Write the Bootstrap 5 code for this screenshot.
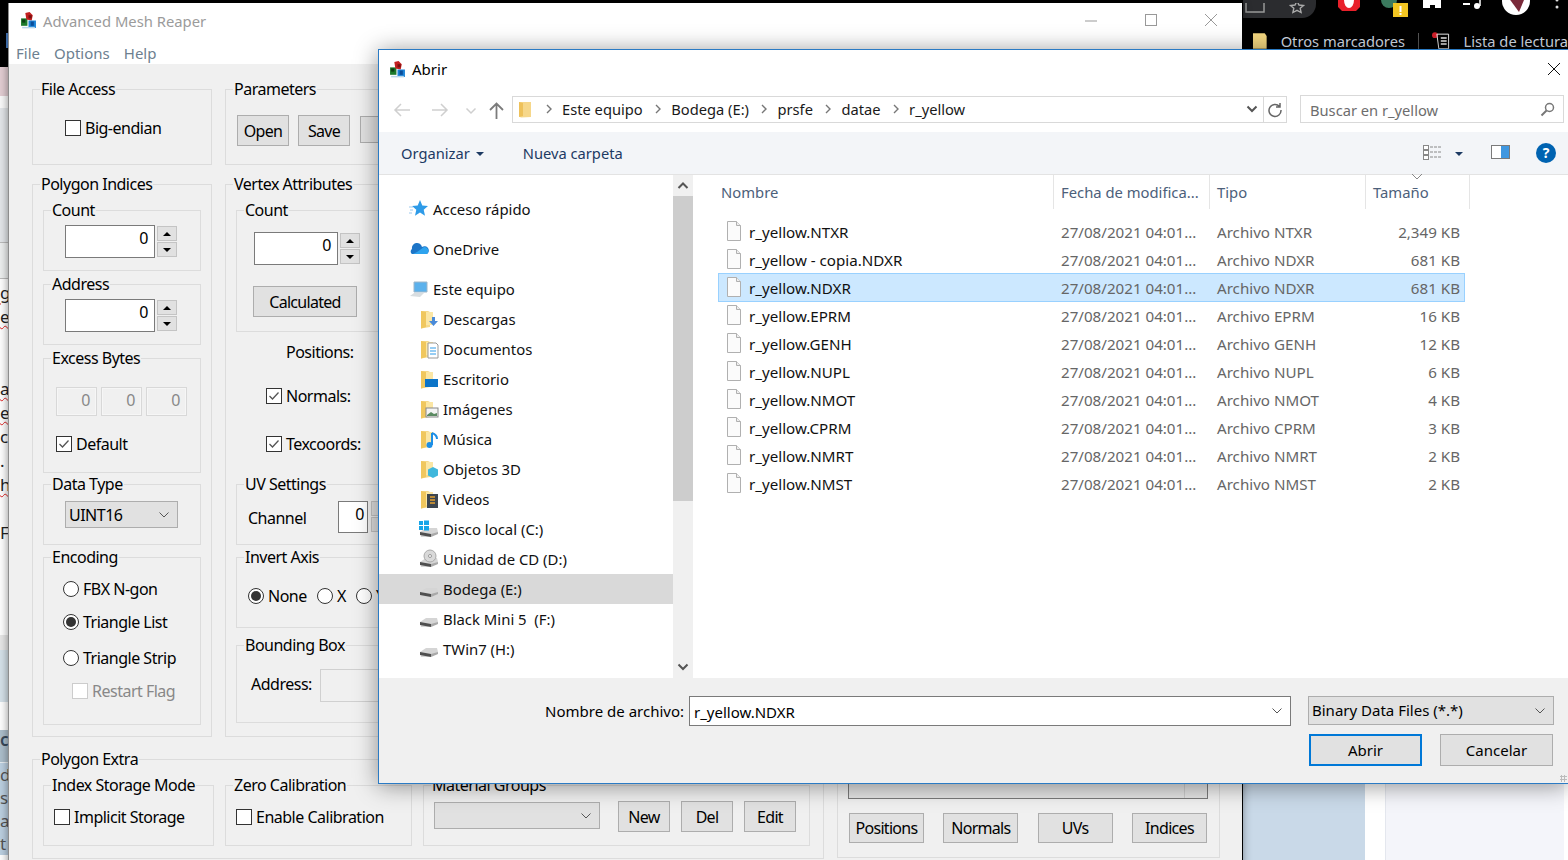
<!DOCTYPE html>
<html lang="es">
<head>
<meta charset="utf-8">
<title>Advanced Mesh Reaper</title>
<link href="https://cdn.jsdelivr.net/npm/bootstrap@5.3.0/dist/css/bootstrap.min.css" rel="stylesheet">
<style>
html,body{margin:0;height:860px;overflow:hidden;background:#000;font-family:"Noto Sans","Open Sans",sans-serif;font-size:15px;line-height:20px;color:#000}
.desk{position:relative;width:1568px;height:860px;overflow:hidden}
/* desktop behind */
.lstrip{width:30px;height:860px;background:#fff;overflow:hidden;font-size:17px;color:#222}
.ls{overflow:hidden;white-space:nowrap}
.ls-black{height:67px;background:#000;position:relative}
.ls-chip{height:15px;width:6px;margin-left:6px;background:#4a80c8;transform:translateY(33px)}
.ls-pink{height:29px;background:#e3ced3}
.ls-w{height:12px;background:#fbfbfb}
.ls-g{height:134px;background:#e4e7ea;border-bottom:1px solid #bbb;box-sizing:content-box}
.ls-g2{height:35px;background:#eef0f0;border-bottom:1px solid #bbb;box-sizing:content-box}
.ls-t{height:24px;line-height:24px;text-decoration:underline wavy #d22 1px;text-underline-offset:2px}
.ls-t2{height:24px;line-height:24px}
.ls-e1{height:2px}.ls-e2{height:48px}.ls-e3{height:90px}
.ls-g3{height:15px;background:#e8e8e8}
.ls-b1{height:52px;background:#d6e2ea}
.ls-w2{height:28px;background:#fff}
.ls-b2{height:33px;background:#adbfcc;color:#3a4a5a;border-bottom:1px solid #e8eef2;font-weight:600}
.ls-b3{height:92px;background:#bcd0e1;color:#555;line-height:23px}
.rstrip{position:absolute;left:1243px;top:0;width:325px;height:860px;background:#000}
.chrome1{height:32px;color:#fff;overflow:hidden}
.urlend{width:73px;height:18px;background:#2b2c2f;border-radius:0 0 14px 0;overflow:hidden}
.chrome2{height:17px;overflow:hidden;color:#d5dde6;font-size:14.7px;white-space:nowrap}
.mk-a{margin-left:9px;margin-right:13px}.mk-sep{width:1px;height:16px;background:#555;margin:0 13px}
.mk-l{margin-left:12px}
.rbot{height:811px}
.r-blue{width:122px;background:#c9d9e8}.r-white{width:20px;background:#fff}
.r-pale{width:179px;background:#f4f5fa;border-left:1px solid #e4e7ee}.r-end{width:4px;background:#fff}
/* app window */
.appwin{position:absolute;left:8px;top:3px;width:1234px;height:880px;background:#f0f0f0;border-left:1px solid #8d8d8d;box-shadow:0 0 9px rgba(0,0,0,.45)}
.a-title{height:35px;background:#fff;color:#9b9b9b;position:relative;padding-left:11px;font-size:14.8px}
.a-title-t{margin-left:6px}
.winctl{position:absolute;top:10px}
.wc1{left:1075px}.wc2{left:1135px}.wc3{left:1195px}
.a-menu{height:26px;background:#fff;padding:3px 0 0 7px;color:#6d7f90;column-gap:14px}
.client{padding:15px 0 0 23px;column-gap:13px;font-size:16px;letter-spacing:-.5px}
.leftcol{width:792px}.rightcol{width:383px}
fieldset.gb{border:1px solid #dcdcdc;border-radius:0;padding:0;min-width:0;display:block}
fieldset.gb>legend{float:none;width:auto;font-size:16px;line-height:19px;margin:0 0 0 7px;padding:1px 1px 0;color:#000}
.pad10{padding:0 10px!important}
fieldset.pad10>legend{margin-left:-3px!important}
.h86{height:86px}.h563{height:563px}.h71{height:71px}.h125{height:125px}.h178{height:178px}.h132{height:132px}.h81{height:81px}.h88{height:88px}.h110{height:110px}.h779{height:779px}
.mt9{margin-top:9px}.mt12{margin-top:12px}.mt3{margin-top:3px}.mt1x{margin-top:1px}.mt2x{margin-top:2px}
.inner6{margin-top:6px}
.qbtn{background:#e1e1e1;border:1px solid #adadad;color:#000;border-radius:0;text-align:center;line-height:1;padding:0;letter-spacing:-.7px}
.w52{width:52px}.h31{height:31px}.btn-third{width:52px;height:27px;margin-left:10px;margin-top:1px}
.w75{width:75px;height:30px}
.calc{width:104px;height:31px;margin:21px 0 0 16px}
.cb{width:16px;height:16px;background:#fff;border:1px solid #333;flex:none;display:inline-block;position:relative}
.cb svg{display:block;width:14px;height:14px}
.cb.off{border-color:#ccc}
.rd{width:16px;height:16px;border-radius:50%;background:#fff;border:1px solid #333;flex:none;display:inline-flex;align-items:center;justify-content:center}
.rd i{width:10px;height:10px;border-radius:50%;background:#333;display:block}
.lbl{margin-left:4px;white-space:nowrap}
.muted{color:#888}
.spin-f{background:#fff;border:1px solid #7a7a7a;text-align:right;padding:2px 6px 0 0;height:33px}
.w90{width:90px}.w84{width:84px}
.spin-c{width:20px;margin-left:2px;margin-top:1px;row-gap:1px}
.spin-b{height:15px;background:#e1e1e1;border:1px solid #c4c4c4;display:flex;align-items:center;justify-content:center}
.tri-u{width:0;height:0;border:4px solid transparent;border-top:0;border-bottom:4px solid #000}
.tri-d{width:0;height:0;border:4px solid transparent;border-bottom:0;border-top:4px solid #000}
.sp-a{margin:5px 0 0 21px}.sp-b{margin:12px 0 0 17px}
.ex-row{margin:19px 0 0 12px;column-gap:4px}
.ex-f{width:41px;height:29px;background:#f0f0f0;border:1px solid #d8d8d8;box-shadow:inset 0 0 0 1px #f6f6f6;color:#888;text-align:right;padding:2px 6px 0 0}
.ex-check{margin:18px 0 0 12px}
.cmb{background:#e1e1e1;border:1px solid #adadad;position:relative}
.cmb-chev{position:absolute;right:7px;top:50%;margin-top:-4px;width:12px;height:8px}
.cmb-dt{width:113px;height:27px;margin:7px 0 0 21px;padding:3px 0 0 3px}
.row-r{height:20px}
.enc1{margin:12px 0 0 19px}.enc2{margin:13px 0 0 19px}.enc3{margin:16px 0 0 19px}.enc4{margin:13px 0 0 28px}
.vpos{margin:10px 0 0 46px}.vnorm{margin:24px 0 0 30px}.vtex{margin:28px 0 0 30px}
.channel{margin:7px 0 0 11px;height:32px;white-space:nowrap}
.ch-l{width:90px;padding-top:7px}
.ch-f{width:30px;height:32px;background:#fff;border:1px solid #7a7a7a;text-align:right;padding:2px 3px 0 0}
.ch-s{width:10px;margin-left:3px;row-gap:1px}.ch-s div{height:15px;background:#e1e1e1;border:1px solid #c4c4c4}
.inv{margin:19px 0 0 11px;height:20px}
.lbl-none{width:45px}.lbl-x{width:15px}
.inv-g{margin-left:4px}
.bb{margin:14px 0 0 14px;height:33px}
.bb-l{width:69px;margin-bottom:4px}
.bb-f{width:60px;height:33px;background:#f0f0f0;border:1px solid #d0d0d0}
.ex-i1{width:171px}.ex-i2{width:187px}.ex-i3{width:387px}
.ck-x{margin:12px 0 0 10px}
.mg-c{width:166px;height:27px;margin-top:7px}
.mg-b{margin-top:6px;column-gap:11px;margin-left:18px}
.rp-wrap{height:100%;padding:0 12px 14px 10px;justify-content:flex-end}
.rp-c{height:30px;background:#e4e4e4;border:1px solid #7a7a7a;border-top:0;width:360px;position:relative}
.rp-seg{position:absolute;right:0;top:0;bottom:0;width:23px;border-left:1px solid #ccc}
.rp-b{margin-top:14px;padding-left:1px}
.gap13{column-gap:13px}.gap11{column-gap:11px}.ex-col1{width:180px;flex:none}
.bigend{margin:19px 0 0 32px}
.par-row{margin:16px 0 0 11px}.par-gap{margin-left:9px}
.uv-top{margin-top:20px}
.bb-top{margin-top:7px}
.inner6x{margin-top:6px}
/* dialog */
.dlg{position:absolute;left:378px;top:49px;width:1190px;height:735px;background:#fff;border:1px solid #2b7bc4;border-right:0;box-shadow:0 2px 22px rgba(0,0,0,.42)}
.d-title{height:40px;padding:0 0 2px 10px;position:relative;flex:none}
.d-title span{margin-left:6px}
.d-x{position:absolute;right:7px;top:12px}
.d-nav{height:42px;position:relative;font-size:14.7px;flex:none}
.nv{position:absolute}
.nv-back{left:14px;top:13px}.nv-fwd{left:52px;top:13px}.nv-dn{left:86px;top:17px}.nv-up{left:110px;top:12px}
.addr{position:absolute;left:133px;top:6px;width:775px;height:27px;border:1px solid #d9d9d9;padding-left:6px;padding-bottom:1px;color:#1a1a1a}
.addr .crumb{margin-left:10px;white-space:nowrap}
.addr .gt{margin-left:12.5px;flex:none}
.addr .gt0{margin-left:15px;flex:none}
.addr-ch{margin-right:28px}
.addr-d{position:absolute;right:0;top:0;bottom:0;width:23px;border-left:1px solid #d9d9d9}
.srch{position:absolute;left:921px;top:5px;width:264px;height:28px;border:1px solid #d9d9d9;color:#6d6d6d;padding:4px 0 0 9px}
.srch svg{position:absolute;right:8px;top:6px}
.d-tool{height:43px;background:#f3f5f8;border-bottom:1px solid #e3e3e3;color:#1d3a63;padding-left:22px;position:relative;font-size:14.7px;flex:none}
.caret-s{display:inline-block;width:0;height:0;border:4px solid transparent;border-bottom:0;border-top:4px solid #1d3a63;margin:0 0 3px 6px}
.tool-2{margin-left:39px}
.t-list{left:1044px;top:11px}.t-pane{left:1112px;top:12px}
.tool-c{left:1076px;top:20px;margin:0}
.help-i{left:1157px;top:11px;width:20px;height:20px;border-radius:50%;background:#0063b1;color:#fff;font-weight:700;font-size:14px}
.d-main{height:503px;flex:none}
.tree{width:294px;padding-top:19px;flex:none;font-size:14.9px}
.tr{height:30px;white-space:nowrap;color:#111}
.tr svg{flex:none}
.l1{padding-left:30px}.l2{padding-left:40px}
.l1 svg{width:20px;height:20px;margin-right:4px}.l2 svg{width:20px;height:20px;margin-right:4px}
.tmb{margin-bottom:10px}
.tr-on{background:#d9d9d9}
.sbar{width:20px;background:#f0f0f0;flex:none;position:relative}
.sb-top{height:21px}.sb-th{height:305px;background:#cdcdcd}.sb-bot{height:177px}
.flist{width:875px;flex:none;padding-left:21px;position:relative}
.hdr{height:34px;color:#4c607a;position:relative;font-size:14.8px}
.hc{height:34px;padding:0 0 0 7px;border-right:1px solid #e5e5e5;white-space:nowrap}
.c1{width:340px}.c2{width:156px}.c3{width:156px}.c4{width:104px}
.sort{position:absolute;left:697px;top:-2px}
.rows{margin-top:8px;margin-left:4px;width:747px}
.fr{height:28px;color:#666;white-space:nowrap;border:1px solid transparent;padding-left:7px;align-items:center;font-size:15.15px}
.fr-on{background:#cce8ff;border-color:#99d1ff;height:29px;margin-bottom:-1px;padding-bottom:1px}
.fr svg{flex:none;margin-right:7px;width:16px;height:20px}
.f-n{width:312px;color:#111;padding-top:2px}.f-d{width:156px;padding-top:2px}.f-t{width:156px;padding-top:2px}.f-s{width:87px;text-align:right;padding-top:2px}
.d-foot{height:105px;background:#f0f0f0;position:relative;flex:none}
.fn-lbl{width:305px;text-align:right;padding-top:23px;flex:none}
.fn-in{width:602px;height:30px;background:#fff;border:1px solid #7a7a7a;margin:18px 0 0 5px;padding:5px 0 0 4px;position:relative;flex:none}
.fn-ty{width:246px;height:29px;margin:18px 0 0 17px;padding:3px 0 0 3px;flex:none}
.act{width:113px;height:32px;flex:none;letter-spacing:0;margin-top:8px}
.act-1{margin-left:930px;border:2px solid #0078d7}
.act-2{margin-left:18px}
.grip{position:absolute;right:1px;bottom:1px;width:7px;height:7px;background-image:radial-gradient(#bbb 1px,transparent 1.2px);background-size:3px 3px}
</style>
</head>
<body>
<svg width="0" height="0" class="position-absolute">
 <defs>
  <symbol id="i-app" viewBox="0 0 16 16"><rect x="1" y="6" width="6" height="7" fill="#1c7a2c"/><rect x="2" y="7" width="3" height="3" fill="#0b3f14"/><path d="M5 1l4-1 3 3-1 5-5-1z" fill="#c21f1f"/><rect x="8" y="3" width="3" height="3" fill="#7a1010"/><rect x="8" y="8" width="7" height="7" fill="#1b82d6"/><rect x="10" y="9" width="3" height="4" fill="#0a4d99"/><rect x="2" y="14" width="12" height="1.4" fill="#b9d6ea"/></symbol>
  <symbol id="i-folder" viewBox="0 0 20 20"><path d="M2 2h7l2 1v15l-9 1.500z" fill="#f5d98a"/><path d="M5 3h9v13H5z" fill="#fbe6a4"/><path d="M2 2l5 1v15l-5 1.500z" fill="#f0c75e"/></symbol>
  <symbol id="i-drive" viewBox="0 0 20 20"><path d="M1 13l6-4h11l1 4-1 2-9 3H2z" fill="#d5d5d5"/><path d="M1 13l11 2v3L1 16z" fill="#4f4f4f"/><path d="M12 15l7-2v2l-7 3z" fill="#a9a9a9"/></symbol>
  <symbol id="i-doc" viewBox="0 0 16 20"><path d="M1.500.5h9l4 4v15h-13z" fill="#fbfbfb" stroke="#b0b0b0"/><path d="M10.500.5v4h4" fill="#eee" stroke="#b0b0b0"/></symbol>
  <symbol id="i-chev" viewBox="0 0 12 8"><path d="M1.500 1.500 6 6l4.500-4.500" fill="none" stroke="#555" stroke-width="1"/></symbol>
  <symbol id="i-chevb" viewBox="0 0 12 8"><path d="M1.500 1.500 6 6l4.500-4.500" fill="none" stroke="#555" stroke-width="2"/></symbol>
  <symbol id="i-gt" viewBox="0 0 6 10"><path d="M1 1l4 4-4 4" fill="none" stroke="#777" stroke-width="1.400"/></symbol>
  <symbol id="i-check" viewBox="0 0 14 14"><path d="M2.500 7l3 3 6-6.500" fill="none" stroke="#555" stroke-width="1.300"/></symbol>
 </defs>
</svg>
<div class="desk">
 <div class="lstrip ls d-flex flex-column">
  <div class="ls-black"><div class="ls-chip"></div></div>
  <div class="ls-pink"></div><div class="ls-w"></div><div class="ls-g"></div><div class="ls-g2"></div>
  <div class="ls-e1"></div><div class="ls-t">gl</div><div class="ls-t">e</div><div class="ls-e2"></div><div class="ls-t">ai</div><div class="ls-t">e</div><div class="ls-t2">c</div><div class="ls-t2">.</div><div class="ls-t">h</div><div class="ls-t2"></div><div class="ls-t2">Fi</div><div class="ls-e3"></div>
  <div class="ls-g3"></div><div class="ls-b1"></div><div class="ls-w2"></div>
  <div class="ls-b2">c</div><div class="ls-b3">de<br>s<br>at<br>t</div>
 </div>

 <div class="rstrip d-flex flex-column">
  <div class="chrome1 d-flex align-items-start">
   <div class="urlend"><svg width="73" height="18" viewBox="0 0 73 18"><rect x="3" y="-4" width="18" height="13" fill="none" stroke="#999" stroke-width="1.500"/><path d="M54 -2l2 4 4.500.5-3.300 2.800.9 4.200-4.100-2.200-4.100 2.200.9-4.200L47.500 2.500 52 2z" fill="none" stroke="#aaa" stroke-width="1.400"/></svg></div>
   <svg class="ms-auto" width="250" height="26" viewBox="0 0 250 26"><path d="M20 -4h22v11l-4 4H24l-4-4z" fill="#e8202a"/><ellipse cx="31" cy="0" rx="5" ry="8" fill="#fff"/><circle cx="71" cy="0" r="8" fill="#3b7a5e"/><rect x="75" y="3" width="15" height="14" fill="#f3c622"/><rect x="81.500" y="6" width="2" height="6" fill="#fff"/><rect x="81.500" y="13" width="2" height="2" fill="#fff"/><path d="M105 -2h18v10h-6v-3h-5v3h-7z" fill="#fff"/><rect x="145" y="3" width="7" height="2" fill="#fff"/><path d="M162 -3v9" stroke="#fff" stroke-width="1.500"/><circle cx="159" cy="6" r="3" fill="#fff"/><circle cx="198" cy="1" r="14" fill="#fff"/><path d="M190 -3l16 3-5 12z" fill="#7a2a3a"/><circle cx="239" cy="0" r="1.500" fill="#ddd"/><circle cx="239" cy="7" r="1.500" fill="#ddd"/></svg>
  </div>
  <div class="chrome2 d-flex align-items-center">
   <svg class="mk-a" width="16" height="17" viewBox="0 0 16 17"><path d="M1 1h12l2 3v13H1z" fill="#f4d77f"/></svg>
   <span>Otros marcadores</span><span class="mk-sep"></span>
   <svg width="20" height="17" viewBox="0 0 20 17"><circle cx="3" cy="3" r="3" fill="#d21f2a"/><path d="M5 2h12v15H7z" fill="none" stroke="#eee"/><path d="M9 6h6M9 9h6M9 12h6" stroke="#eee" stroke-width="1.500"/></svg>
   <span class="mk-l">Lista de lectura</span>
  </div>
  <div class="rbot d-flex"><div class="r-blue"></div><div class="r-white"></div><div class="r-pale"></div><div class="r-end"></div></div>
 </div>

 <div class="appwin">
  <div class="a-title d-flex align-items-center">
   <svg width="17" height="17"><use href="#i-app"/></svg><span class="a-title-t">Advanced Mesh Reaper</span>
   <svg class="winctl wc1" width="14" height="14"><path d="M1 8h12" stroke="#999"/></svg>
   <svg class="winctl wc2" width="14" height="14"><rect x="1.500" y="1.500" width="11" height="11" fill="none" stroke="#999"/></svg>
   <svg class="winctl wc3" width="14" height="14"><path d="M1 1l12 12M13 1 1 13" stroke="#999"/></svg>
  </div>
  <div class="a-menu d-flex align-items-center"><span>File</span><span>Options</span><span>Help</span></div>
  <div class="client d-flex">
   <div class="leftcol d-flex flex-column">
    <div class="d-flex gap13">
     <fieldset class="gb h86 ex-col1"><legend>File Access</legend>
      <div class="d-flex align-items-center bigend"><span class="cb"></span><span class="lbl">Big-endian</span></div>
     </fieldset>
     <fieldset class="gb h86 flex-grow-1"><legend>Parameters</legend>
      <div class="d-flex align-items-start par-row"><button class="qbtn w52 h31">Open</button><button class="qbtn w52 h31 par-gap">Save</button><button class="qbtn btn-third">&nbsp;</button></div>
     </fieldset>
    </div>
    <div class="d-flex gap13 mt9">
     <fieldset class="gb h563 ex-col1 pad10"><legend>Polygon Indices</legend>
      <fieldset class="gb h71 inner6"><legend>Count</legend>
       <div class="d-flex sp-a"><div class="spin-f w90">0</div><div class="spin-c d-flex flex-column"><div class="spin-b"><span class="tri-u"></span></div><div class="spin-b"><span class="tri-d"></span></div></div></div>
      </fieldset>
      <fieldset class="gb h71 mt3"><legend>Address</legend>
       <div class="d-flex sp-a"><div class="spin-f w90">0</div><div class="spin-c d-flex flex-column"><div class="spin-b"><span class="tri-u"></span></div><div class="spin-b"><span class="tri-d"></span></div></div></div>
      </fieldset>
      <fieldset class="gb h125 mt3"><legend>Excess Bytes</legend>
       <div class="d-flex ex-row"><div class="ex-f">0</div><div class="ex-f">0</div><div class="ex-f">0</div></div>
       <div class="d-flex align-items-center ex-check"><span class="cb"><svg><use href="#i-check"/></svg></span><span class="lbl">Default</span></div>
      </fieldset>
      <fieldset class="gb h71 mt1x"><legend>Data Type</legend>
       <div class="cmb cmb-dt">UINT16<svg class="cmb-chev"><use href="#i-chev"/></svg></div>
      </fieldset>
      <fieldset class="gb h178 mt2x"><legend>Encoding</legend>
       <div class="d-flex align-items-center enc1 row-r"><span class="rd"></span><span class="lbl">FBX N-gon</span></div>
       <div class="d-flex align-items-center enc2 row-r"><span class="rd"><i></i></span><span class="lbl">Triangle List</span></div>
       <div class="d-flex align-items-center enc3 row-r"><span class="rd"></span><span class="lbl">Triangle Strip</span></div>
       <div class="d-flex align-items-center enc4 row-r"><span class="cb off"></span><span class="lbl muted">Restart Flag</span></div>
      </fieldset>
     </fieldset>
     <fieldset class="gb h563 flex-grow-1 pad10"><legend>Vertex Attributes</legend>
      <fieldset class="gb h132 inner6"><legend>Count</legend>
       <div class="d-flex sp-b"><div class="spin-f w84">0</div><div class="spin-c d-flex flex-column"><div class="spin-b"><span class="tri-u"></span></div><div class="spin-b"><span class="tri-d"></span></div></div></div>
       <button class="qbtn calc d-block">Calculated</button>
      </fieldset>
      <div class="vpos row-r"><span class="lbl">Positions:</span></div>
      <div class="d-flex align-items-center vnorm row-r"><span class="cb"><svg><use href="#i-check"/></svg></span><span class="lbl">Normals:</span></div>
      <div class="d-flex align-items-center vtex row-r"><span class="cb"><svg><use href="#i-check"/></svg></span><span class="lbl">Texcoords:</span></div>
      <fieldset class="gb h71 uv-top"><legend>UV Settings</legend>
       <div class="d-flex channel"><span class="ch-l">Channel</span><div class="ch-f">0</div><div class="ch-s d-flex flex-column"><div></div><div></div></div></div>
      </fieldset>
      <fieldset class="gb h81 mt2x"><legend>Invert Axis</legend>
       <div class="d-flex align-items-center inv"><span class="rd"><i></i></span><span class="lbl lbl-none">None</span><span class="rd inv-g"></span><span class="lbl lbl-x">X</span><span class="rd inv-g"></span><span class="lbl">Y</span></div>
      </fieldset>
      <fieldset class="gb h88 bb-top"><legend>Bounding Box</legend>
       <div class="d-flex align-items-center bb"><span class="bb-l">Address:</span><div class="bb-f"></div></div>
      </fieldset>
     </fieldset>
    </div>
    <fieldset class="gb h110 mt12 pad10"><legend>Polygon Extra</legend>
     <div class="d-flex gap11 inner6x">
      <fieldset class="gb h71 ex-i1"><legend>Index Storage Mode</legend><div class="d-flex align-items-center ck-x"><span class="cb"></span><span class="lbl">Implicit Storage</span></div></fieldset>
      <fieldset class="gb h71 ex-i2"><legend>Zero Calibration</legend><div class="d-flex align-items-center ck-x"><span class="cb"></span><span class="lbl">Enable Calibration</span></div></fieldset>
      <fieldset class="gb h71 ex-i3"><legend>Material Groups</legend>
       <div class="d-flex align-items-start pad10"><div class="cmb mg-c"><svg class="cmb-chev"><use href="#i-chev"/></svg></div><div class="d-flex mg-b"><button class="qbtn w52 h31">New</button><button class="qbtn w52 h31">Del</button><button class="qbtn w52 h31">Edit</button></div></div>
      </fieldset>
     </div>
    </fieldset>
   </div>
   <div class="rightcol">
    <fieldset class="gb h779"><legend>&nbsp;</legend>
     <div class="d-flex flex-column rp-wrap">
      <div class="rp-c"><div class="rp-seg"></div></div>
      <div class="d-flex justify-content-between rp-b"><button class="qbtn w75">Positions</button><button class="qbtn w75">Normals</button><button class="qbtn w75">UVs</button><button class="qbtn w75">Indices</button></div>
     </div>
    </fieldset>
   </div>
  </div>
 </div>

 <div class="dlg d-flex flex-column">
  <div class="d-title d-flex align-items-center"><svg width="17" height="17"><use href="#i-app"/></svg><span>Abrir</span>
   <svg class="d-x" width="14" height="14"><path d="M1 1l12 12M13 1 1 13" stroke="#111" stroke-width="1"/></svg></div>
  <div class="d-nav">
   <svg class="nv nv-back" width="18" height="14"><path d="M17 7H2M8 1 2 7l6 6" fill="none" stroke="#cfcfcf" stroke-width="1.500"/></svg>
   <svg class="nv nv-fwd" width="18" height="14"><path d="M1 7h15M10 1l6 6-6 6" fill="none" stroke="#cfcfcf" stroke-width="1.500"/></svg>
   <svg class="nv nv-dn" width="12" height="8"><path d="M1.500 1.500 6 6l4.500-4.500" fill="none" stroke="#cfcfcf" stroke-width="1.500"/></svg>
   <svg class="nv nv-up" width="15" height="17"><path d="M7.500 17V2M1 8l6.500-6.500L14 8" fill="none" stroke="#7b7b7b" stroke-width="1.800"/></svg>
   <div class="addr d-flex align-items-center"><svg width="12" height="17" viewBox="0 0 12 17"><path d="M0 1h12v15l-10 .5-2-1z" fill="#f6d78a"/><path d="M0 1l4 1v13l-4 1z" fill="#eec15a"/></svg>
    <svg class="gt0" width="6" height="10"><use href="#i-gt"/></svg><span class="crumb">Este equipo</span><svg class="gt" width="6" height="10"><use href="#i-gt"/></svg><span class="crumb">Bodega (E:)</span><svg class="gt" width="6" height="10"><use href="#i-gt"/></svg><span class="crumb">prsfe</span><svg class="gt" width="6" height="10"><use href="#i-gt"/></svg><span class="crumb">datae</span><svg class="gt" width="6" height="10"><use href="#i-gt"/></svg><span class="crumb">r_yellow</span>
    <svg class="ms-auto addr-ch" width="12" height="8"><use href="#i-chevb"/></svg>
    <div class="addr-d d-flex align-items-center justify-content-center"><svg width="16" height="16" viewBox="0 0 16 16"><path d="M12.500 4.500A6 6 0 1 0 14 8M13 1v4H9" fill="none" stroke="#666" stroke-width="1.500"/></svg></div>
   </div>
   <div class="srch">Buscar en r_yellow<svg width="15" height="15" viewBox="0 0 15 15"><circle cx="9.500" cy="5.500" r="4" fill="none" stroke="#777" stroke-width="1.500"/><path d="M6.500 8.500 1.500 13.500" stroke="#777" stroke-width="2"/></svg></div>
  </div>
  <div class="d-tool d-flex align-items-center">
   <span>Organizar<i class="caret-s"></i></span><span class="tool-2">Nueva carpeta</span>
   <svg class="nv t-list" width="20" height="20" viewBox="0 0 20 20"><rect x=".500" y="2.500" width="5" height="4" fill="#fff" stroke="#888"/><rect x=".500" y="7.500" width="5" height="4" fill="#fff" stroke="#888"/><rect x=".500" y="12.500" width="5" height="4" fill="#fff" stroke="#888"/><path d="M7 4h11M7 9h11M7 14h11" stroke="#888" stroke-dasharray="3 1"/></svg>
   <span class="nv caret-s tool-c"></span>
   <svg class="nv t-pane" width="19" height="16" viewBox="0 0 19 16"><rect x=".500" y="1.500" width="18" height="13" fill="#fff" stroke="#7a7a7a"/><rect x="10" y="2" width="8" height="12" fill="#3f97e0"/></svg>
   <div class="nv help-i d-flex align-items-center justify-content-center">?</div>
  </div>
  <div class="d-main d-flex">
   <div class="tree">
    <div class="tr l1 tmb d-flex align-items-center"><svg viewBox="0 0 20 20"><path d="M11 1l2.300 5.500 5.700.5-4.300 3.800 1.300 6-5-3.200-5 3.200 1.300-6L3 7l5.700-.5z" fill="#2e9be8"/><path d="M0 8h4M1 11h3M0 14h3" stroke="#9cc9ee"/></svg>Acceso rápido</div>
    <div class="tr l1 tmb d-flex align-items-center"><svg viewBox="0 0 20 20"><path d="M3 10a5 5 0 0 1 10-2 4 4 0 0 1 5 7H3a3 3 0 0 1 0-5z" fill="#1d75c7"/><path d="M4 15h14a4 4 0 0 0-3-7l-7 5z" fill="#2ea3ee"/></svg>OneDrive</div>
    <div class="tr l1 d-flex align-items-center"><svg viewBox="0 0 20 20"><path d="M5 3h13v10H5z" fill="#5bb1ec" stroke="#9fb6c8"/><path d="M1 17l4-3h10l-4 4z" fill="#d8dde0"/></svg>Este equipo</div>
    <div class="tr l2 d-flex align-items-center"><svg viewBox="0 0 20 20"><use href="#i-folder"/><path d="M13 8h3v4h3l-4.500 5L10 12h3z" fill="#4a8ad8"/></svg>Descargas</div>
    <div class="tr l2 d-flex align-items-center"><svg viewBox="0 0 20 20"><use href="#i-folder"/><path d="M9 4h8l2 2v13H9z" fill="#fff" stroke="#999"/><path d="M11 9h6M11 12h6M11 15h6" stroke="#2e9be8"/></svg>Documentos</div>
    <div class="tr l2 d-flex align-items-center"><svg viewBox="0 0 20 20"><use href="#i-folder"/><rect x="6" y="10" width="13" height="8" fill="#0c74c8"/></svg>Escritorio</div>
    <div class="tr l2 d-flex align-items-center"><svg viewBox="0 0 20 20"><use href="#i-folder"/><rect x="7" y="9" width="12" height="9" fill="#f4f4f4" stroke="#888"/><path d="M8 16l4-3 3 2 3-1v3H8z" fill="#5b8a62"/></svg>Imágenes</div>
    <div class="tr l2 d-flex align-items-center"><svg viewBox="0 0 20 20"><use href="#i-folder"/><path d="M13 4v12" stroke="#1e8fe6" stroke-width="2"/><path d="M13 4c3 1 5 3 5 6" fill="none" stroke="#1e8fe6" stroke-width="2"/><circle cx="10.500" cy="16" r="3" fill="#1e8fe6"/></svg>Música</div>
    <div class="tr l2 d-flex align-items-center"><svg viewBox="0 0 20 20"><use href="#i-folder"/><path d="M14 8l5 2.500v6L14 19l-5-2.500v-6z" fill="#3fb7dc"/></svg>Objetos 3D</div>
    <div class="tr l2 d-flex align-items-center"><svg viewBox="0 0 20 20"><use href="#i-folder"/><rect x="8" y="5" width="11" height="14" fill="#3d4650"/><path d="M11 8h5M11 11h5M11 14h5" stroke="#e3a02e" stroke-width="1.600"/></svg>Videos</div>
    <div class="tr l2 d-flex align-items-center"><svg viewBox="0 0 20 20"><use href="#i-drive"/><path d="M0 2h4v4H0zM5 1.500h5v4.500H5zM0 7h4v4H0zM5 7h5v4.500H5z" fill="#16a5e8"/></svg>Disco local (C:)</div>
    <div class="tr l2 d-flex align-items-center"><svg viewBox="0 0 20 20"><use href="#i-drive"/><circle cx="11" cy="7" r="6" fill="#d9d9d9" stroke="#aaa"/><circle cx="11" cy="7" r="1.500" fill="#fff" stroke="#999"/></svg>Unidad de CD (D:)</div>
    <div class="tr l2 tr-on d-flex align-items-center"><svg viewBox="0 0 20 20"><use href="#i-drive"/></svg>Bodega (E:)</div>
    <div class="tr l2 d-flex align-items-center"><svg viewBox="0 0 20 20"><use href="#i-drive"/></svg>Black Mini 5&nbsp; (F:)</div>
    <div class="tr l2 d-flex align-items-center"><svg viewBox="0 0 20 20"><use href="#i-drive"/></svg>TWin7 (H:)</div>
   </div>
   <div class="sbar d-flex flex-column">
    <div class="sb-top d-flex align-items-center justify-content-center"><svg width="12" height="8"><path d="M1.500 6 6 1.500 10.500 6" fill="none" stroke="#555" stroke-width="2"/></svg></div>
    <div class="sb-th"></div>
    <div class="sb-bot d-flex align-items-end justify-content-center pb-2"><svg width="12" height="8"><use href="#i-chevb"/></svg></div>
   </div>
   <div class="flist">
    <div class="hdr d-flex">
     <div class="hc c1 d-flex align-items-center">Nombre</div><div class="hc c2 d-flex align-items-center">Fecha de modifica...</div><div class="hc c3 d-flex align-items-center">Tipo</div><div class="hc c4 d-flex align-items-center">Tamaño</div>
     <svg class="sort" width="12" height="7"><path d="M1 1l5 5 5-5" fill="none" stroke="#888"/></svg>
    </div>
    <div class="rows">
     <div class="fr d-flex"><svg><use href="#i-doc"/></svg><span class="f-n">r_yellow.NTXR</span><span class="f-d">27/08/2021 04:01...</span><span class="f-t">Archivo NTXR</span><span class="f-s">2,349 KB</span></div>
     <div class="fr d-flex"><svg><use href="#i-doc"/></svg><span class="f-n">r_yellow - copia.NDXR</span><span class="f-d">27/08/2021 04:01...</span><span class="f-t">Archivo NDXR</span><span class="f-s">681 KB</span></div>
     <div class="fr fr-on d-flex"><svg><use href="#i-doc"/></svg><span class="f-n">r_yellow.NDXR</span><span class="f-d">27/08/2021 04:01...</span><span class="f-t">Archivo NDXR</span><span class="f-s">681 KB</span></div>
     <div class="fr d-flex"><svg><use href="#i-doc"/></svg><span class="f-n">r_yellow.EPRM</span><span class="f-d">27/08/2021 04:01...</span><span class="f-t">Archivo EPRM</span><span class="f-s">16 KB</span></div>
     <div class="fr d-flex"><svg><use href="#i-doc"/></svg><span class="f-n">r_yellow.GENH</span><span class="f-d">27/08/2021 04:01...</span><span class="f-t">Archivo GENH</span><span class="f-s">12 KB</span></div>
     <div class="fr d-flex"><svg><use href="#i-doc"/></svg><span class="f-n">r_yellow.NUPL</span><span class="f-d">27/08/2021 04:01...</span><span class="f-t">Archivo NUPL</span><span class="f-s">6 KB</span></div>
     <div class="fr d-flex"><svg><use href="#i-doc"/></svg><span class="f-n">r_yellow.NMOT</span><span class="f-d">27/08/2021 04:01...</span><span class="f-t">Archivo NMOT</span><span class="f-s">4 KB</span></div>
     <div class="fr d-flex"><svg><use href="#i-doc"/></svg><span class="f-n">r_yellow.CPRM</span><span class="f-d">27/08/2021 04:01...</span><span class="f-t">Archivo CPRM</span><span class="f-s">3 KB</span></div>
     <div class="fr d-flex"><svg><use href="#i-doc"/></svg><span class="f-n">r_yellow.NMRT</span><span class="f-d">27/08/2021 04:01...</span><span class="f-t">Archivo NMRT</span><span class="f-s">2 KB</span></div>
     <div class="fr d-flex"><svg><use href="#i-doc"/></svg><span class="f-n">r_yellow.NMST</span><span class="f-d">27/08/2021 04:01...</span><span class="f-t">Archivo NMST</span><span class="f-s">2 KB</span></div>
    </div>
   </div>
  </div>
  <div class="d-foot">
   <div class="d-flex"><div class="fn-lbl">Nombre de archivo:</div><div class="fn-in">r_yellow.NDXR<svg class="cmb-chev"><use href="#i-chev"/></svg></div><div class="cmb fn-ty">Binary Data Files (*.*)<svg class="cmb-chev"><use href="#i-chev"/></svg></div></div>
   <div class="d-flex"><button class="qbtn act act-1">Abrir</button><button class="qbtn act act-2">Cancelar</button></div>
   <div class="grip"></div>
  </div>
 </div>
</div>
</body>
</html>
